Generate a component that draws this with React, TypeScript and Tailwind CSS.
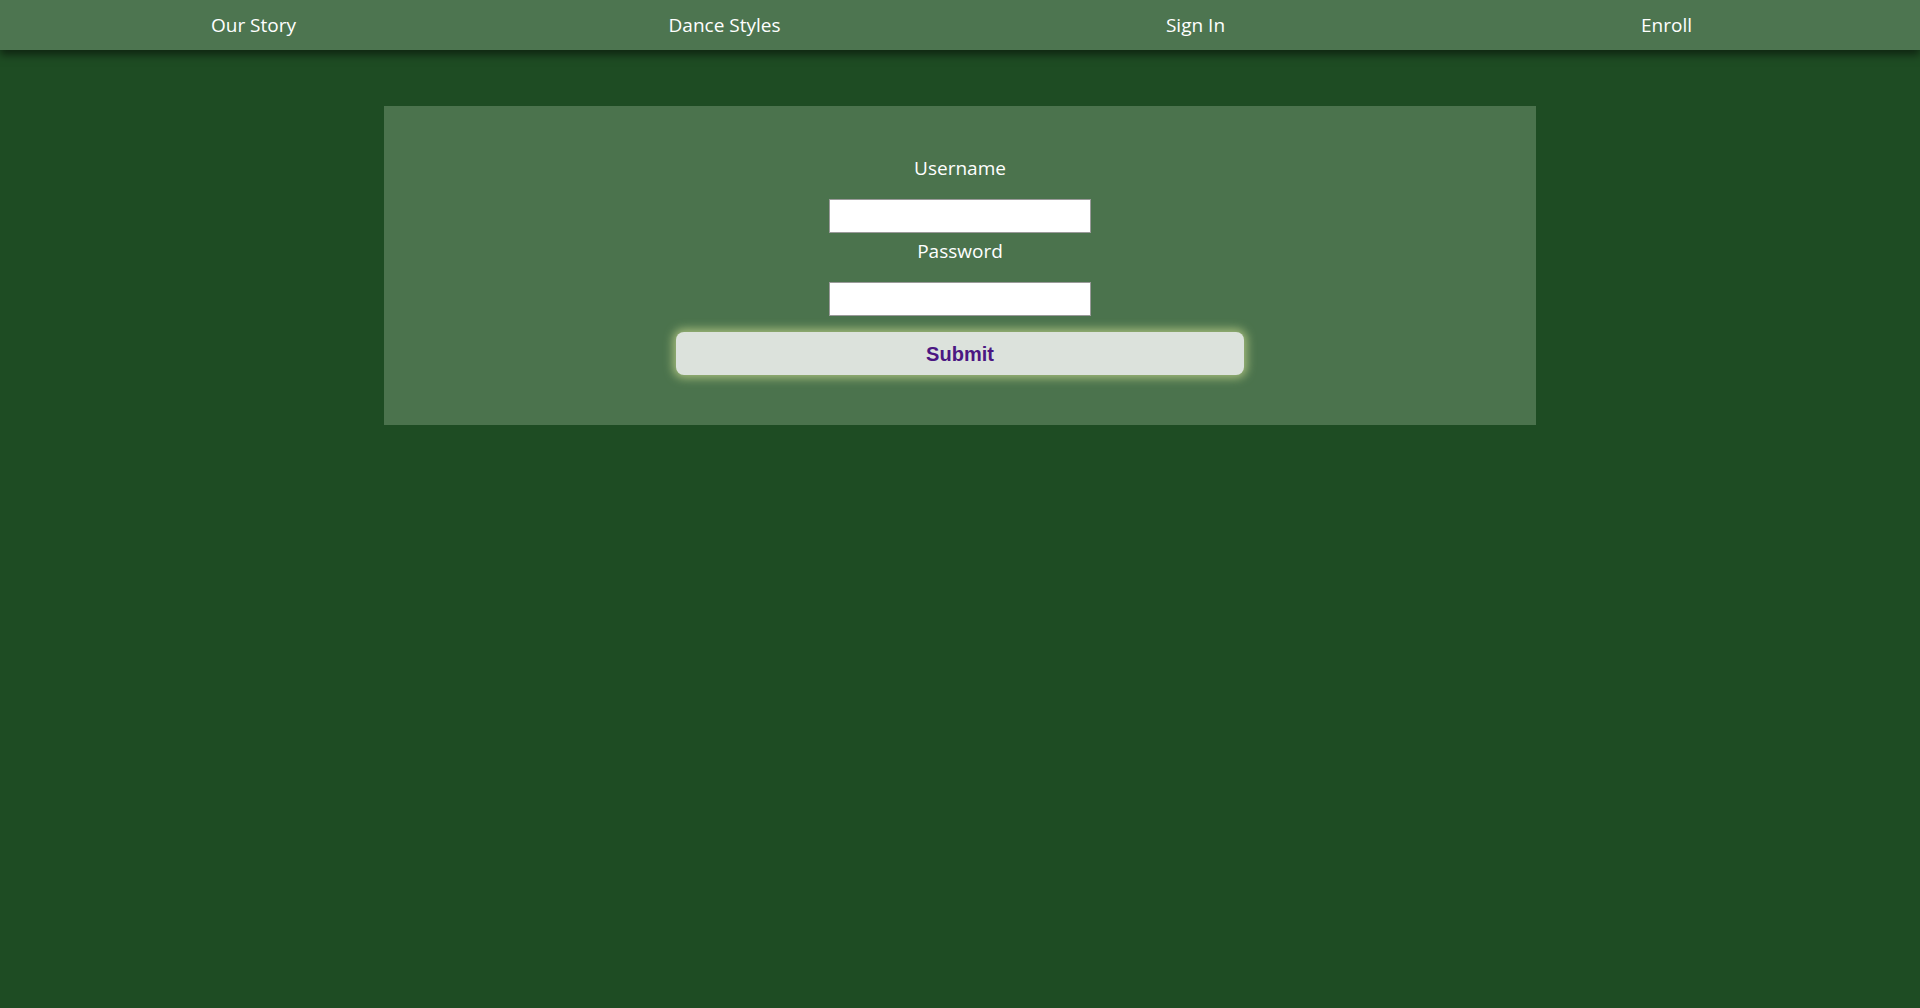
import React from "react";

export default function App() {
  const font = { fontFamily: '"Open Sans", "Noto Sans", sans-serif' };
  return (
    <div className="min-h-[1008px] w-full bg-[#1e4c23] text-white" style={font}>
      <nav className="relative z-10 h-[50px] bg-[#4d7550] shadow-[0_5px_8px_rgba(0,0,0,0.5)] grid grid-cols-4 items-center px-[18px] text-center text-[19px] leading-6">
        <a className="block">Our Story</a>
        <a className="block">Dance Styles</a>
        <a className="block">Sign In</a>
        <a className="block">Enroll</a>
      </nav>
      <div className="mx-auto mt-[56px] w-[1152px] bg-[#4b734d] pt-[50px] pb-[50px] flex flex-col items-center">
        <label className="block h-6 text-[19px] leading-6 mb-[19px]">Username</label>
        <input
          type="text"
          className="block w-[262px] h-[34px] bg-white border border-[#9a9a9a] outline-none"
        />
        <label className="block h-6 text-[19px] leading-6 mt-[6px] mb-[19px]">Password</label>
        <input
          type="password"
          className="block w-[262px] h-[34px] bg-white border border-[#9a9a9a] outline-none"
        />
        <button
          className="mt-[16px] w-[568px] h-[43px] rounded-[8px] bg-[#dce2dc] text-[#4b1782] text-[20px] leading-[42px] font-bold shadow-[0_0_10px_3px_rgba(196,214,140,0.75)]"
          style={{ fontFamily: '"Liberation Sans", Arial, sans-serif' }}
        >
          Submit
        </button>
      </div>
    </div>
  );
}
